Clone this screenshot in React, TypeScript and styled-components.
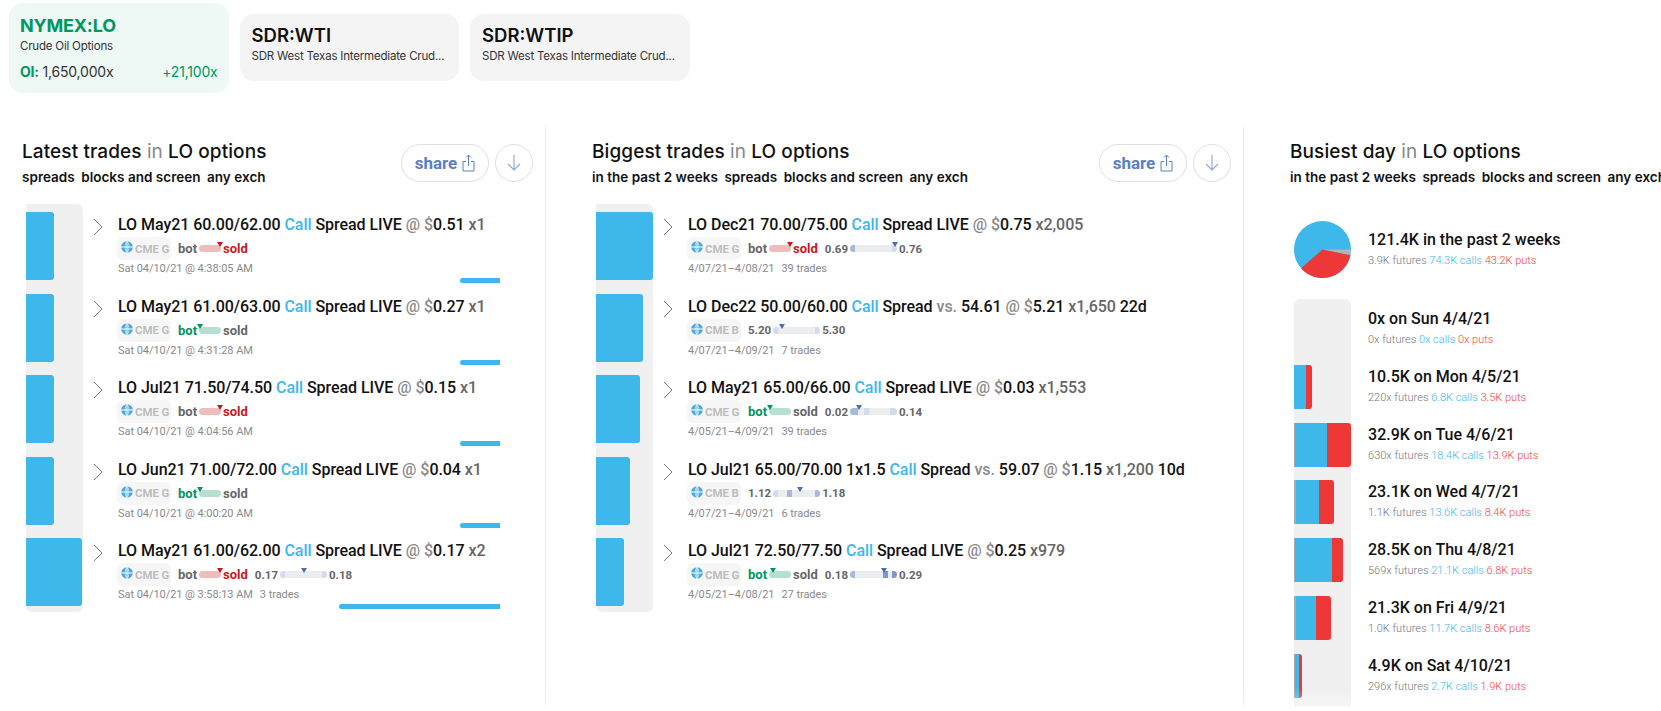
import React from "react";
import styled, { createGlobalStyle } from "styled-components";

const Global = createGlobalStyle`
  html, body { margin: 0; padding: 0; background: #fff; height: 711px; overflow: hidden; }
  body { font-family: Roboto, "Liberation Sans", sans-serif; color: #111; }
`;

const BLUE = "#3eb7ea";
const RED = "#ee3737";
const GREEN = "#00965e";

const Page = styled.div`
  position: relative;
  width: 1661px;
  height: 711px;
  overflow: hidden;
`;
const Fade = styled.div`
  position: absolute;
  left: 0;
  right: 0;
  bottom: 0;
  height: 24px;
  background: linear-gradient(to bottom, rgba(255,255,255,0) 0%, rgba(255,255,255,.35) 80%, #fff 84%);
`;
const CardRow = styled.div`
  display: flex;
  align-items: center;
  gap: 11px;
  height: 96px;
  padding-left: 9px;
  margin-bottom: 31px;
  font-family: Inter, "Noto Sans", sans-serif;
`;
const Card = styled.div<{ $active?: boolean }>`
  width: 219.5px;
  box-sizing: border-box;
  height: ${(p) => (p.$active ? 90 : 67)}px;
  border-radius: 14px;
  background: ${(p) => (p.$active ? "#eef8f4" : "#f4f4f4")};
  padding: ${(p) => (p.$active ? "11px 11px 0" : "10px 12px 0")};
  margin-top: -1px;
`;
const Symbol = styled.div<{ $active?: boolean }>`
  font-size: ${(p) => (p.$active ? 18 : 18.5)}px;
  line-height: 23px;
  font-weight: ${(p) => (p.$active ? 700 : 600)};
  letter-spacing: ${(p) => (p.$active ? -0.2 : 0)}px;
  color: ${(p) => (p.$active ? GREEN : "#111")};
`;
const CardDesc = styled.div`
  font-size: 11.5px;
  letter-spacing: -0.2px;
  line-height: 16px;
  margin-top: 1px;
  color: #333;
  white-space: nowrap;
`;
const OiRow = styled.div`
  display: flex;
  justify-content: space-between;
  font-size: 14px;
  line-height: 18px;
  margin-top: 9px;
  color: #333;
  letter-spacing: -0.2px;
`;
const OiLabel = styled.b`
  color: ${GREEN};
  font-weight: 700;
`;
const OiChange = styled.span`
  color: ${GREEN};
`;

const Columns = styled.div`
  display: flex;
  align-items: stretch;
  height: 584px;
`;
const Column = styled.section<{ $w: number; $first?: boolean }>`
  flex: 0 0 ${(p) => p.$w}px;
  box-sizing: border-box;
  padding-left: ${(p) => (p.$first ? 22 : 46)}px;
  padding-right: 12px;
  border-left: ${(p) => (p.$first ? "none" : "1px solid #e9e9e9")};
  overflow: hidden;
  white-space: nowrap;
`;
const Header = styled.header`
  display: flex;
  justify-content: space-between;
  height: 77px;
  padding-top: 17px;
  box-sizing: border-box;
  font-family: Inter, "Noto Sans", sans-serif;
`;
const Title = styled.h2`
  margin: -4px 0 0;
  font-size: 19px;
  line-height: 24px;
  font-weight: 500;
  letter-spacing: 0.1px;
`;
const Muted = styled.span`
  color: #888;
  font-weight: 400;
`;
const Sub = styled.div`
  display: flex;
  gap: 6.5px;
  font-size: 13.5px;
  line-height: 18px;
  font-weight: 600;
  margin-top: 4px;
  letter-spacing: 0.02px;
`;
const Actions = styled.div`
  display: flex;
  gap: 6px;
  height: 38px;
`;
const ShareButton = styled.button`
  display: flex;
  align-items: center;
  justify-content: center;
  gap: 5px;
  width: 88px;
  height: 38px;
  padding: 0;
  border: 1px solid #e0e0e4;
  border-radius: 19px;
  background: #fff;
  color: #5a7fc4;
  font: 700 17px Roboto, sans-serif;
`;
const RoundButton = styled.button`
  display: flex;
  align-items: center;
  justify-content: center;
  width: 38px;
  height: 38px;
  padding: 0;
  border: 1px solid #e0e0e4;
  border-radius: 50%;
  background: #fff;
`;

const List = styled.div`
  margin-left: 4px;
`;
const Row = styled.div`
  display: flex;
  height: 81.5px;
`;
const Track = styled.div`
  flex: 0 0 57px;
  box-sizing: border-box;
  padding: 8px 0 5.5px;
  background: #f0f0f0;
  ${Row}:first-child & { border-radius: 0 6px 0 0; }
  ${Row}:last-child & { border-radius: 0 0 6px 6px; }
`;
const Bar = styled.div<{ $w: number }>`
  width: ${(p) => p.$w}px;
  height: 68px;
  background: ${BLUE};
  border-radius: 0 3px 3px 0;
`;
const Chevron = styled.svg`
  flex: none;
  width: 10px;
  height: 18px;
  margin: 14px 15px 0 10px;
`;
const Body = styled.div`
  flex: 1;
  min-width: 0;
  padding-top: 11px;
  box-sizing: border-box;
  display: flex;
  flex-direction: column;
  position: relative;
`;
const TradeTitle = styled.div`
  font-size: 16px;
  line-height: 20px;
  font-weight: 500;
  color: #111;
  letter-spacing: -0.05px;
`;
const Call = styled.span`
  color: ${BLUE};
`;
const Dim = styled.span`
  color: #8a8a8a;
`;
const Size = styled.span`
  color: #666;
`;
const Meta = styled.div`
  display: flex;
  align-items: center;
  gap: 7px;
  height: 23px;
  margin-top: 2px;
  margin-left: -1px;
  font-size: 11.5px;
  font-weight: 700;
  color: #666;
`;
const Tag = styled.div`
  flex: none;
  display: flex;
  align-items: center;
  gap: 2px;
  box-sizing: border-box;
  width: 54px;
  height: 23px;
  padding-left: 4px;
  border-radius: 6px;
  background: #f6f6f6;
  color: #bdbdbd;
  font-size: 11.5px;
  font-weight: 700;
  white-space: nowrap;
  letter-spacing: -0.1px;
`;
const Side = styled.div`
  display: flex;
  align-items: center;
  gap: 2px;
  font-size: 13px;
`;
const SideLabel = styled.span<{ $color?: string }>`
  color: ${(p) => p.$color || "#666"};
`;
const Pill = styled.div<{ $color: string }>`
  position: relative;
  width: 22px;
  height: 7px;
  border-radius: 4px;
  background: ${(p) => p.$color};
`;
const Marker = styled.i<{ $x: number; $color: string }>`
  position: absolute;
  top: -3px;
  left: ${(p) => p.$x}px;
  width: 0;
  height: 0;
  border-left: 3px solid transparent;
  border-right: 3px solid transparent;
  border-top: 5px solid ${(p) => p.$color};
`;
const Range = styled.div`
  display: flex;
  align-items: center;
  gap: 2px;
`;
const RangeBar = styled.div`
  position: relative;
  width: 47px;
  height: 7px;
  border-radius: 4px;
  background: #ecedf0;
  overflow: visible;
`;
const Seg = styled.i<{ $x: number; $w: number; $color: string }>`
  position: absolute;
  top: 0;
  bottom: 0;
  left: ${(p) => p.$x}px;
  width: ${(p) => p.$w}px;
  background: ${(p) => p.$color};
  border-radius: ${(p) => (p.$x === 0 ? "4px 0 0 4px" : p.$x + p.$w >= 47 ? "0 4px 4px 0" : "0")};
`;
const Time = styled.div`
  font-size: 11px;
  line-height: 14px;
  letter-spacing: -0.05px;
  margin-top: 2px;
  color: #8a8a8a;
`;
const Trades = styled.span`
  margin-left: 7px;
`;
const Volume = styled.div<{ $w: number }>`
  position: absolute;
  top: 74px;
  right: 0;
  width: ${(p) => p.$w}px;
  height: 5px;
  border-radius: 3px 0 0 3px;
  background: ${BLUE};
`;
const RowsFrame = styled.div`
  width: 382px;
  flex: none;
`;

const PieRow = styled.div`
  display: flex;
  align-items: center;
  margin: 17px 0 22px 4px;
  height: 56px;
`;
const Pie = styled.svg`
  flex: none;
  width: 57px;
  height: 57px;
  margin-right: 17px;
`;
const Stat = styled.div``;
const StatTitle = styled.div`
  font-size: 16px;
  line-height: 20px;
  font-weight: 500;
  color: #111;
`;
const StatSub = styled.div`
  font-size: 11px;
  line-height: 14px;
  font-weight: 300;
  margin-top: 4px;
  color: #777;
`;
const Calls = styled.span`
  color: #3eb7ea;
`;
const Puts = styled.span`
  color: #ee4444;
`;
const Days = styled.div`
  margin-left: 4px;
`;
const DayRow = styled.div`
  display: flex;
  height: 57.75px;
  &:last-child { height: 62px; }
`;
const DayTrack = styled.div`
  flex: 0 0 57px;
  margin-right: 17px;
  padding-top: 8px;
  box-sizing: border-box;
  background: #f0f0f0;
  ${DayRow}:first-child & { border-radius: 6px 6px 0 0; }
`;
const Stack = styled.div`
  display: flex;
  width: max-content;
  height: 44px;
  border-radius: 0 3px 3px 0;
  overflow: hidden;
`;
const StackPart = styled.div<{ $w: number; $color: string }>`
  width: ${(p) => p.$w}px;
  background: ${(p) => p.$color};
`;
const DayText = styled.div`
  padding-top: 10px;
`;

const ChevronIcon = () => (
  <Chevron viewBox="0 0 10 18">
    <polyline points="1,1 9,9 1,17" fill="none" stroke="#777" strokeWidth="1" />
  </Chevron>
);
const GlobeSvg = styled.svg`
  flex: none;
  margin-top: -3px;
`;
const Globe = () => (
  <GlobeSvg width="12" height="12" viewBox="0 0 12 12">
    <circle cx="6" cy="6" r="5.8" fill="#46a8dc" />
    <path d="M0 6h12M6 0v12" stroke="#fff" strokeWidth="1" />
    <path d="M6 .5C3.5 2.5 3.5 9.5 6 11.5C8.5 9.5 8.5 2.5 6 .5" stroke="#fff" strokeWidth=".6" fill="none" />
  </GlobeSvg>
);

type RangeSpec = { lo: string; hi: string; marker: number; segs: [number, number, string][] };
type Trade = {
  title: React.ReactNode;
  tag?: string;
  side?: "bot" | "sold";
  sideX?: number;
  range?: RangeSpec;
  time: string;
  trades?: string;
  bar: number;
  vol?: number;
};

const DK = "#a5b9da";
const LT = "#d4dcec";
const MK = "#4a6db0";

const Head = ({ a, rest }: { a: string; rest: React.ReactNode }) => (
  <TradeTitle>
    {a} <Call>Call</Call> {rest}
  </TradeTitle>
);
const Price = ({ p, x }: { p: string; x: string }) => (
  <>
    <Dim>@ $</Dim>
    {p} <Size>{x}</Size>
  </>
);

const latest: Trade[] = [
  { title: <Head a="LO May21 60.00/62.00" rest={<>Spread LIVE <Price p="0.51" x="x1" /></>} />, side: "sold", sideX: 18, time: "Sat 04/10/21 @ 4:38:05 AM", bar: 28, vol: 40 },
  { title: <Head a="LO May21 61.00/63.00" rest={<>Spread LIVE <Price p="0.27" x="x1" /></>} />, side: "bot", sideX: -2, time: "Sat 04/10/21 @ 4:31:28 AM", bar: 28, vol: 40 },
  { title: <Head a="LO Jul21 71.50/74.50" rest={<>Spread LIVE <Price p="0.15" x="x1" /></>} />, side: "sold", sideX: 18, time: "Sat 04/10/21 @ 4:04:56 AM", bar: 28, vol: 40 },
  { title: <Head a="LO Jun21 71.00/72.00" rest={<>Spread LIVE <Price p="0.04" x="x1" /></>} />, side: "bot", sideX: -2, time: "Sat 04/10/21 @ 4:00:20 AM", bar: 28, vol: 40 },
  { title: <Head a="LO May21 61.00/62.00" rest={<>Spread LIVE <Price p="0.17" x="x2" /></>} />, side: "sold", sideX: 18, range: { lo: "0.17", hi: "0.18", marker: 21, segs: [[0, 5, LT], [42, 5, LT]] }, time: "Sat 04/10/21 @ 3:58:13 AM", trades: "3 trades", bar: 56, vol: 161 },
];
const biggest: Trade[] = [
  { title: <Head a="LO Dec21 70.00/75.00" rest={<>Spread LIVE <Price p="0.75" x="x2,005" /></>} />, side: "sold", sideX: 18, range: { lo: "0.69", hi: "0.76", marker: 42, segs: [[0, 5, DK], [42, 5, LT]] }, time: "4/07/21–4/08/21", trades: "39 trades", bar: 57 },
  { title: <Head a="LO Dec22 50.00/60.00" rest={<>Spread <Dim>vs.</Dim> 54.61 <Price p="5.21" x="x1,650" /> 22d</>} />, tag: "CME B", range: { lo: "5.20", hi: "5.30", marker: 6, segs: [[0, 5, LT], [42, 5, LT]] }, time: "4/07/21–4/09/21", trades: "7 trades", bar: 47 },
  { title: <Head a="LO May21 65.00/66.00" rest={<>Spread LIVE <Price p="0.03" x="x1,553" /></>} />, side: "bot", sideX: -2, range: { lo: "0.02", hi: "0.14", marker: 6, segs: [[0, 8, DK], [14, 5, LT], [40, 7, LT]] }, time: "4/05/21–4/09/21", trades: "39 trades", bar: 44 },
  { title: <Head a="LO Jul21 65.00/70.00 1x1.5" rest={<>Spread <Dim>vs.</Dim> 59.07 <Price p="1.15" x="x1,200" /> 10d</>} />, tag: "CME B", range: { lo: "1.12", hi: "1.18", marker: 24, segs: [[0, 5, LT], [14, 5, DK], [42, 5, DK]] }, time: "4/07/21–4/09/21", trades: "6 trades", bar: 34 },
  { title: <Head a="LO Jul21 72.50/77.50" rest={<>Spread LIVE <Price p="0.25" x="x979" /></>} />, side: "bot", sideX: 1, range: { lo: "0.18", hi: "0.29", marker: 31, segs: [[0, 5, DK], [33, 5, "#7d97c8"], [42, 5, "#7d97c8"]] }, time: "4/05/21–4/08/21", trades: "27 trades", bar: 28 },
];
const days = [
  { t: "0x on Sun 4/4/21", f: "0x", c: "0x", p: "0x", fv: 0, cv: 0, pv: 0 },
  { t: "10.5K on Mon 4/5/21", f: "220x", c: "6.8K", p: "3.5K", fv: 0.22, cv: 6.8, pv: 3.5 },
  { t: "32.9K on Tue 4/6/21", f: "630x", c: "18.4K", p: "13.9K", fv: 0.63, cv: 18.4, pv: 13.9 },
  { t: "23.1K on Wed 4/7/21", f: "1.1K", c: "13.6K", p: "8.4K", fv: 1.1, cv: 13.6, pv: 8.4 },
  { t: "28.5K on Thu 4/8/21", f: "569x", c: "21.1K", p: "6.8K", fv: 0.57, cv: 21.1, pv: 6.8 },
  { t: "21.3K on Fri 4/9/21", f: "1.0K", c: "11.7K", p: "8.6K", fv: 1.0, cv: 11.7, pv: 8.6 },
  { t: "4.9K on Sat 4/10/21", f: "296x", c: "2.7K", p: "1.9K", fv: 0.3, cv: 2.7, pv: 1.9 },
];

const TradeList = ({ items }: { items: Trade[] }) => (
  <List>
    {items.map((t, i) => (
      <Row key={i}>
        <Track>
          <Bar $w={t.bar} />
        </Track>
        <ChevronIcon />
        <RowsFrame>
          <Body>
            {t.title}
            <Meta>
              <Tag>
                <Globe />
                {t.tag || "CME G"}
              </Tag>
              {t.side && (
                <Side>
                  <SideLabel $color={t.side === "bot" ? GREEN : undefined}>bot</SideLabel>
                  <Pill $color={t.side === "bot" ? "#b4e0cd" : "#eebcbc"}>
                    <Marker $x={t.sideX || 0} $color={t.side === "bot" ? GREEN : "#c8171c"} />
                  </Pill>
                  <SideLabel $color={t.side === "sold" ? "#c8171c" : undefined}>sold</SideLabel>
                </Side>
              )}
              {t.range && (
                <Range>
                  <span>{t.range.lo}</span>
                  <RangeBar>
                    {t.range.segs.map(([x, w, c], j) => (
                      <Seg key={j} $x={x} $w={w} $color={c} />
                    ))}
                    <Marker $x={t.range.marker} $color={MK} />
                  </RangeBar>
                  <span>{t.range.hi}</span>
                </Range>
              )}
            </Meta>
            <Time>
              {t.time}
              {t.trades && <Trades>{t.trades}</Trades>}
            </Time>
            {t.vol && <Volume $w={t.vol} />}
          </Body>
        </RowsFrame>
      </Row>
    ))}
  </List>
);

const Buttons = () => (
  <Actions>
    <ShareButton>
      share
      <svg width="13" height="18" viewBox="0 0 13 18" fill="none" stroke="#5a7fc4" strokeWidth="1">
        <path d="M4 7.5H1v9.5h11V7.5H9" />
        <path d="M6.5 12V1M4 3.5 6.5 1 9 3.5" />
      </svg>
    </ShareButton>
    <RoundButton>
      <svg width="16" height="18" viewBox="0 0 16 18" fill="none" stroke="#8ea5d6" strokeWidth="1.1">
        <path d="M8 1v15M2 10l6 6 6-6" />
      </svg>
    </RoundButton>
  </Actions>
);

const scale = 57 / 32.9;

export default function App() {
  return (
    <Page>
      <Global />
      <CardRow>
        <Card $active>
          <Symbol $active>NYMEX:LO</Symbol>
          <CardDesc>Crude Oil Options</CardDesc>
          <OiRow>
            <span>
              <OiLabel>OI:</OiLabel> 1,650,000x
            </span>
            <OiChange>+21,100x</OiChange>
          </OiRow>
        </Card>
        <Card>
          <Symbol>SDR:WTI</Symbol>
          <CardDesc>SDR West Texas Intermediate Crud...</CardDesc>
        </Card>
        <Card>
          <Symbol>SDR:WTIP</Symbol>
          <CardDesc>SDR West Texas Intermediate Crud...</CardDesc>
        </Card>
      </CardRow>
      <Columns>
        <Column $w={545} $first>
          <Header>
            <div>
              <Title>
                Latest trades <Muted>in</Muted> LO options
              </Title>
              <Sub>
                <span>spreads</span>
                <span>blocks and screen</span>
                <span>any exch</span>
              </Sub>
            </div>
            <Buttons />
          </Header>
          <TradeList items={latest} />
        </Column>
        <Column $w={698}>
          <Header>
            <div>
              <Title>
                Biggest trades <Muted>in</Muted> LO options
              </Title>
              <Sub>
                <span>in the past 2 weeks</span>
                <span>spreads</span>
                <span>blocks and screen</span>
                <span>any exch</span>
              </Sub>
            </div>
            <Buttons />
          </Header>
          <TradeList items={biggest} />
        </Column>
        <Column $w={418}>
          <Header>
            <div>
              <Title>
                Busiest day <Muted>in</Muted> LO options
              </Title>
              <Sub>
                <span>in the past 2 weeks</span>
                <span>spreads</span>
                <span>blocks and screen</span>
                <span>any exch</span>
              </Sub>
            </div>
          </Header>
          <PieRow>
            <Pie viewBox="-28.5 -28.5 57 57">
              <circle r="28.5" fill={BLUE} />
              <path d="M0 0 L28.5 0 A28.5 28.5 0 0 1 27.9 5.7 Z" fill="#b4b4b4" />
              <path d="M0 0 L27.9 5.7 A28.5 28.5 0 0 1 -21.5 18.7 Z" fill={RED} />
            </Pie>
            <Stat>
              <StatTitle>121.4K in the past 2 weeks</StatTitle>
              <StatSub>
                3.9K futures <Calls>74.3K calls</Calls> <Puts>43.2K puts</Puts>
              </StatSub>
            </Stat>
          </PieRow>
          <Days>
            {days.map((d) => (
              <DayRow key={d.t}>
                <DayTrack>
                  {d.cv > 0 && (
                    <Stack>
                      <StackPart $w={d.fv * scale} $color="#aaa" />
                      <StackPart $w={d.cv * scale} $color={BLUE} />
                      <StackPart $w={d.pv * scale} $color={RED} />
                    </Stack>
                  )}
                </DayTrack>
                <DayText>
                  <StatTitle>{d.t}</StatTitle>
                  <StatSub>
                    {d.f} futures <Calls>{d.c} calls</Calls> <Puts>{d.p} puts</Puts>
                  </StatSub>
                </DayText>
              </DayRow>
            ))}
          </Days>
        </Column>
      </Columns>
      <Fade />
    </Page>
  );
}
